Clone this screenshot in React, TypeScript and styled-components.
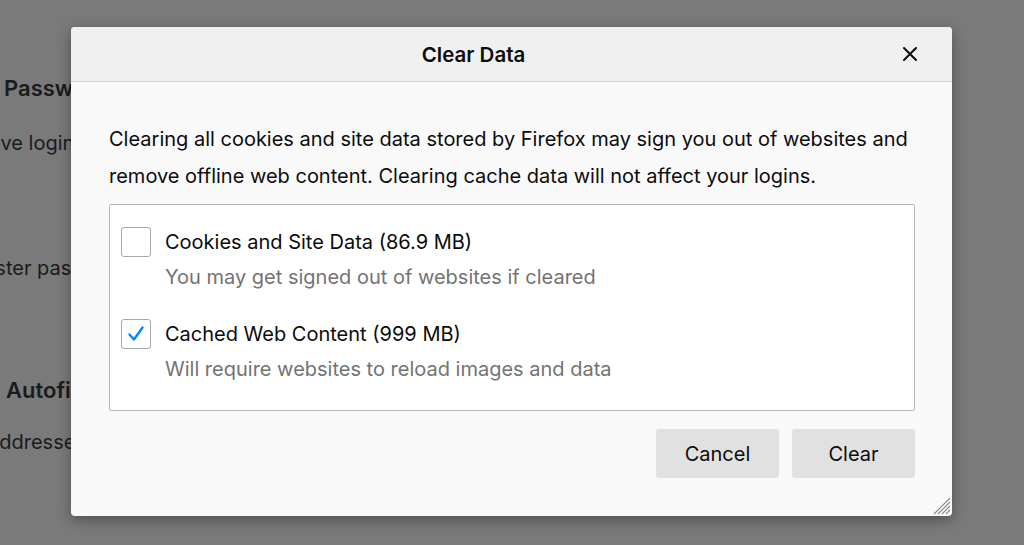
import React, { useState } from "react";
import styled, { createGlobalStyle } from "styled-components";

const GlobalStyle = createGlobalStyle`
  html, body {
    margin: 0;
    padding: 0;
    width: 1024px;
    height: 545px;
    overflow: hidden;
    background: #7a7a7b;
  }
  * {
    box-sizing: border-box;
  }
`;

const Screen = styled.div`
  position: relative;
  width: 1024px;
  height: 545px;
  overflow: hidden;
  font-family: Inter, "Liberation Sans", Arial, sans-serif;
`;

const Page = styled.div`
  display: flex;
  flex-direction: column;
  padding-top: 75px;
  color: #1b1b1c;
`;

const PageHeading = styled.div<{ $gap: number; $shift: number }>`
  font-size: 22px;
  font-weight: 600;
  margin-top: ${(p) => p.$gap}px;
  margin-left: ${(p) => p.$shift}px;
  white-space: nowrap;
`;

const PageText = styled.div<{ $gap: number; $shift: number }>`
  font-size: 20px;
  margin-top: ${(p) => p.$gap}px;
  margin-left: ${(p) => p.$shift}px;
  white-space: nowrap;
`;

const Dialog = styled.div`
  position: absolute;
  left: 71px;
  top: 27px;
  width: 881px;
  height: 489px;
  background: #f9f9fa;
  border-radius: 4px;
  box-shadow: 0 4px 14px rgba(0, 0, 0, 0.35);
  display: flex;
  flex-direction: column;
  overflow: hidden;
`;

const Header = styled.div`
  position: relative;
  height: 55px;
  flex-shrink: 0;
  background: #f0f0f1;
  border-bottom: 1px solid #cfcfd1;
  display: flex;
  align-items: center;
  justify-content: center;
  padding-right: 76px;
`;

const Title = styled.div`
  font-size: 20.5px;
  font-weight: 600;
  color: #0c0c0d;
  padding-top: 1px;
`;

const CloseButton = styled.button`
  position: absolute;
  right: 32px;
  top: 17px;
  width: 20px;
  height: 20px;
  padding: 0;
  border: none;
  background: none;
  cursor: pointer;
  display: flex;
  align-items: center;
  justify-content: center;
`;

const Body = styled.div`
  flex: 1;
  display: flex;
  flex-direction: column;
  padding: 39px 37px 0 38px;
`;

const Intro = styled.p`
  margin: 0;
  font-size: 20px;
  line-height: 37px;
  color: #0c0c0d;
  white-space: nowrap;
`;

const OptionBox = styled.div`
  margin-top: 9px;
  height: 207px;
  background: #ffffff;
  border: 1px solid #b8b8ba;
  border-radius: 2px;
  padding: 22px 11px 0 11px;
  display: flex;
  flex-direction: column;
  gap: 27px;
`;

const Option = styled.label`
  display: grid;
  grid-template-columns: 30px 1fr;
  column-gap: 14px;
  align-items: center;
  cursor: pointer;
`;

const Box = styled.span`
  width: 30px;
  height: 30px;
  border: 1px solid #a9a9ab;
  border-radius: 3px;
  background: #ffffff;
  display: flex;
  align-items: center;
  justify-content: center;
`;

const OptionLabel = styled.span`
  font-size: 20px;
  color: #0c0c0d;
  line-height: 30px;
`;

const OptionHint = styled.span`
  grid-column: 2;
  font-size: 20px;
  line-height: 30px;
  margin-top: 5px;
  color: #737373;
`;

const Footer = styled.div`
  display: flex;
  justify-content: flex-end;
  gap: 13px;
  margin-top: 18px;
`;

const Button = styled.button`
  width: 123px;
  height: 49px;
  border: none;
  border-radius: 3px;
  background: #e1e1e2;
  font-family: inherit;
  font-size: 20px;
  color: #0c0c0d;
  cursor: pointer;
  &:hover {
    background: #d6d6d8;
  }
`;

const Grip = styled.svg`
  position: absolute;
  right: 1px;
  bottom: 1px;
`;

const Check = () => (
  <svg width="20" height="20" viewBox="0 0 20 20">
    <path
      d="M3.5 10.5 L8 15.5 L16.5 3.5"
      fill="none"
      stroke="#0a84ff"
      strokeWidth="2.4"
      strokeLinecap="round"
      strokeLinejoin="round"
    />
  </svg>
);

const options = [
  {
    label: "Cookies and Site Data (86.9 MB)",
    hint: "You may get signed out of websites if cleared",
    checked: false,
  },
  {
    label: "Cached Web Content (999 MB)",
    hint: "Will require websites to reload images and data",
    checked: true,
  },
];

const App = () => {
  const [checked, setChecked] = useState(options.map((o) => o.checked));

  const toggle = (i: number) => {
    setChecked((prev) => prev.map((v, j) => (j === i ? !v : v)));
  };

  return (
    <Screen>
      <GlobalStyle />
      <Page>
        <PageHeading $gap={0} $shift={4}>Passwords</PageHeading>
        <PageText $gap={30} $shift={-86}>Ask to save logins and passwords</PageText>
        <PageText $gap={101} $shift={-93}>Use a master password</PageText>
        <PageHeading $gap={97} $shift={6}>Autofill</PageHeading>
        <PageText $gap={27} $shift={-12}>addresses</PageText>
      </Page>

      <Dialog>
        <Header>
          <Title>Clear Data</Title>
          <CloseButton aria-label="Close">
            <svg width="16" height="16" viewBox="0 0 16 16">
              <path
                d="M2 2 L14 14 M14 2 L2 14"
                stroke="#0c0c0d"
                strokeWidth="2"
                strokeLinecap="round"
              />
            </svg>
          </CloseButton>
        </Header>
        <Body>
          <Intro>
            Clearing all cookies and site data stored by Firefox may sign you out of websites and
            <br />
            remove offline web content. Clearing cache data will not affect your logins.
          </Intro>
          <OptionBox>
            {options.map((o, i) => (
              <Option key={o.label} onClick={() => toggle(i)}>
                <Box>{checked[i] && <Check />}</Box>
                <OptionLabel>{o.label}</OptionLabel>
                <OptionHint>{o.hint}</OptionHint>
              </Option>
            ))}
          </OptionBox>
          <Footer>
            <Button>Cancel</Button>
            <Button>Clear</Button>
          </Footer>
        </Body>
        <Grip width="20" height="20" viewBox="0 0 20 20">
          <path
            d="M19 3 L3 19 M19 7 L7 19 M19 11 L11 19 M19 15 L15 19"
            stroke="#8a8a8c"
            strokeWidth="1.1"
          />
        </Grip>
      </Dialog>
    </Screen>
  );
};

export default App;
